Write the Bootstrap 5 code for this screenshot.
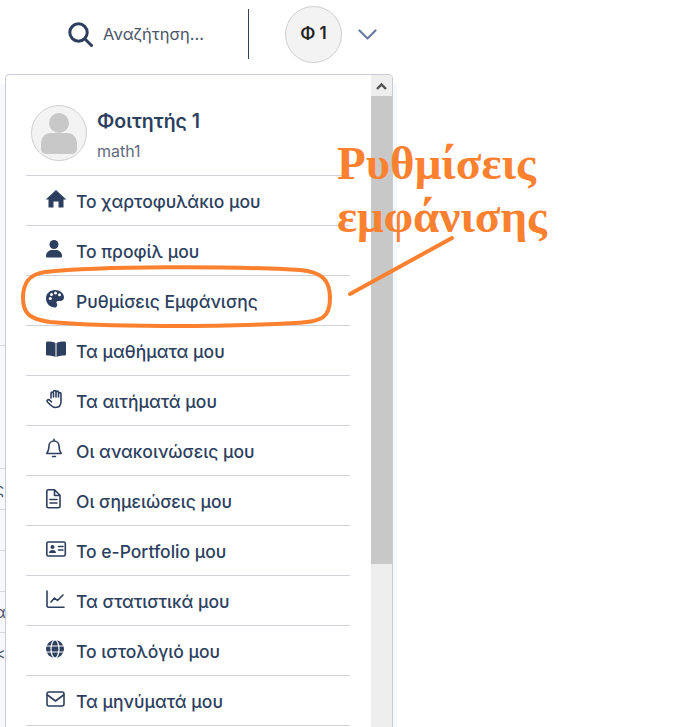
<!DOCTYPE html>
<html lang="el">
<head>
    <meta charset="UTF-8">
    <meta name="viewport" content="width=device-width, initial-scale=1.0">
    <title>Ρυθμίσεις εμφάνισης</title>
    <link href="https://cdn.jsdelivr.net/npm/bootstrap@5.3.2/dist/css/bootstrap.min.css" rel="stylesheet">
    <style>
        body {
            font-family: "Inter", "Noto Sans", sans-serif;
            color: #2d3f5e;
            height: 727px;
            overflow: hidden;
            position: relative;
            background: #fff;
        }
        .top-bar {
            height: 84px;
            padding: 6px 0 22px 68px;
        }
        .search-text {
            font-size: 16.5px;
            color: #4a5568;
            margin-left: 10px;
            width: 145px;
        }
        .top-sep {
            width: 1px;
            height: 50px;
            background: #33415c;
            margin-right: 36px;
        }
        .avatar-top {
            width: 57px;
            height: 57px;
            border: 1px solid #cfcfcf;
            background: #f3f3f3;
            color: #222;
            font-weight: 600;
            font-size: 17px;
        }
        .page-under {
            width: 397px;
            height: 643px;
            background: #f6f8fc;
        }
        .under-strip {
            width: 5px;
            padding-top: 261px;
        }
        .under-row {
            height: 41px;
            border-top: 1px solid #d5d8e0;
            font-size: 16px;
            line-height: 40px;
            color: #4a5568;
            white-space: nowrap;
            overflow: hidden;
        }
        .under-row.row-tall {
            height: 123px;
        }
        .under-row span {
            display: block;
            margin-left: -5px;
        }
        .user-menu.dropdown-menu {
            top: 74px;
            left: 5px;
            width: 388px;
            height: 680px;
            border: 1px solid #c9ccd6;
            border-radius: 4px 4px 0 0;
            overflow: hidden;
            color: #2d3f5e;
        }
        .menu-body {
            width: 365px;
            padding: 0 20px;
        }
        .menu-head {
            height: 101px;
            padding: 30px 0 0 5px;
            border-bottom: 1px solid #d0d3db;
        }
        .avatar-big {
            width: 56px;
            height: 56px;
            border: 1px solid #cfcfcf;
            background: #f3f3f3;
            margin-right: 10px;
        }
        .user-name {
            font-size: 19.5px;
            font-weight: 600;
            line-height: 22px;
            margin-bottom: 9px;
            margin-top: 5px;
        }
        .user-login {
            font-size: 16px;
            line-height: 20px;
            color: #5f6b7d;
        }
        .user-menu .dropdown-item {
            height: 50px;
            padding: 4px 0 0 20px;
            border-bottom: 1px solid #d0d3db;
            color: #2d3f5e;
            font-size: 17.5px;
            font-weight: 500;
        }
        .icon-box {
            width: 30px;
            height: 22px;
            flex: none;
            fill: #2d3f5e;
            margin-top: -8px;
        }
        .icon-line {
            fill: none;
            stroke: #2d3f5e;
            stroke-width: 1.6;
            stroke-linecap: round;
            stroke-linejoin: round;
        }
        .fake-scroll {
            width: 21px;
            background: #eeeeee;
            margin-left: 1px;
        }
        .scroll-btn {
            height: 21px;
        }
        .scroll-thumb {
            height: 468px;
            background: #c8c8c8;
        }
        .note-text {
            position: absolute;
            left: 337px;
            top: 137px;
            z-index: 1001;
            font-family: "Liberation Serif", serif;
            font-weight: 700;
            font-size: 47px;
            line-height: 53px;
            color: #fb8130;
        }
        .note-marks {
            position: absolute;
            left: 0;
            top: 0;
            z-index: 1001;
        }
    </style>
</head>
<body>

    <!-- Barra superior -->
    <header class="top-bar d-flex align-items-center">
        <svg width="25" height="25" viewBox="0 0 25 25" fill="none" stroke="#2d3f5e" stroke-width="3" stroke-linecap="round">
            <circle cx="10.5" cy="10.5" r="8.7"/>
            <path d="M17 17l6.5 6.5"/>
        </svg>
        <span class="search-text">Αναζήτηση...</span>
        <div class="top-sep"></div>
        <div class="avatar-top rounded-circle d-flex align-items-center justify-content-center">Φ 1</div>
        <svg class="ms-3" width="19" height="11" viewBox="0 0 19 11" fill="none" stroke="#6a7ba0" stroke-width="2.2" stroke-linecap="round" stroke-linejoin="round">
            <path d="M1.5 1.5l8 8 8-8"/>
        </svg>
    </header>

    <!-- Lo que queda debajo del menu -->
    <div class="page-under">
        <div class="under-strip">
            <div class="under-row row-tall"></div>
            <div class="under-row"><span>ς</span></div>
            <div class="under-row"></div>
            <div class="under-row"></div>
            <div class="under-row"><span>α</span></div>
            <div class="under-row"><span>&lt;</span></div>
        </div>
    </div>

    <!-- Menu de usuario -->
    <div class="user-menu dropdown-menu show p-0 d-flex">
        <div class="menu-body">
            <div class="menu-head d-flex">
                <div class="avatar-big rounded-circle d-flex align-items-center justify-content-center">
                    <svg width="38" height="42" viewBox="0 0 38 42" fill="#c8c8c8">
                        <circle cx="19" cy="11" r="10"/>
                        <path d="M1 32c0-7 4-11 10-11h16c6 0 10 4 10 11v4c0 4-2 6-6 6H7c-4 0-6-2-6-6z"/>
                    </svg>
                </div>
                <div>
                    <div class="user-name">Φοιτητής 1</div>
                    <div class="user-login">math1</div>
                </div>
            </div>

            <a class="dropdown-item d-flex align-items-center" href="#">
                <svg class="icon-box" viewBox="0 0 30 22"><path d="M10 2L20.300 11.500H17.500V19.500H12.500V13.500H7.500V19.500H2.500V11.500H-.3z"/></svg>
                Το χαρτοφυλάκιο μου
            </a>
            <a class="dropdown-item d-flex align-items-center" href="#">
                <svg class="icon-box" viewBox="0 0 30 22"><circle cx="8" cy="6.500" r="4.500"/><path d="M0 18c0-3.500 3-6 6-6h4c3 0 6 2.500 6 6 0 1-.5 1.500-1.500 1.500h-13C.5 19.500 0 19 0 18z"/></svg>
                Το προφίλ μου
            </a>
            <a class="dropdown-item d-flex align-items-center" href="#">
                <svg class="icon-box" viewBox="0 0 30 22"><path d="M9 2c5 0 9 3.300 9 7.500 0 2.500-2 3.500-4 3.500h-2c-1.500 0-2 1.500-1.200 2.500 1 1.300.2 4-1.800 4-5 0-9-4-9-9s4-8.500 9-8.500z"/><g fill="#fff"><circle cx="4.300" cy="10.500" r="1.500"/><circle cx="5.500" cy="6.500" r="1.500"/><circle cx="9.500" cy="5" r="1.500"/><circle cx="13.500" cy="6.800" r="1.500"/></g></svg>
                Ρυθμίσεις Εμφάνισης
            </a>
            <a class="dropdown-item d-flex align-items-center" href="#">
                <svg class="icon-box" viewBox="0 0 30 22"><path d="M0 5c0-1 .7-1.500 1.500-1.500 3 0 6 .3 8 1.500v14c-2-1-5-1.500-8-1.500-.8 0-1.500-.5-1.500-1.500zM20 5c0-1-.7-1.500-1.500-1.500-3 0-6 .3-8 1.500v14c2-1 5-1.500 8-1.500.8 0 1.500-.5 1.500-1.500z"/></svg>
                Τα μαθήματα μου
            </a>
            <a class="dropdown-item d-flex align-items-center" href="#">
                <svg class="icon-box" viewBox="0 0 30 22"><path class="icon-line" d="M5 10V5.500c0-1.800 2.500-1.800 2.500 0V9m0-5c0-2 2.500-2 2.500 0v5m0-4.500c0-1.800 2.500-1.800 2.500 0V9m0-3c0-1.800 2.500-1.800 2.500 0v7.500c0 4-2.500 6-5.500 6-2.500 0-3.500-1-5-2.500l-3-3c-1.300-1.300.5-3 2-2l2 1.800"/></svg>
                Τα αιτήματά μου
            </a>
            <a class="dropdown-item d-flex align-items-center" href="#">
                <svg class="icon-box" viewBox="0 0 30 22"><path class="icon-line" d="M8 3c-3 0-5 2.200-5 5 0 4-1 5.500-2.200 7.500h14.400C14 13.500 13 12 13 8c0-2.800-2-5-5-5zM8 1.300V3M6.500 18.500h3"/></svg>
                Οι ανακοινώσεις μου
            </a>
            <a class="dropdown-item d-flex align-items-center" href="#">
                <svg class="icon-box" viewBox="0 0 30 22"><path class="icon-line" d="M2.500 1.800h6l5.500 5.500V18c0 1-.7 1.700-1.700 1.700H2.500c-1 0-1.700-.7-1.700-1.700V3.500c0-1 .7-1.700 1.700-1.700zM8.500 2v5.500H14M4 11.500h7M4 15h7"/></svg>
                Οι σημειώσεις μου
            </a>
            <a class="dropdown-item d-flex align-items-center" href="#">
                <svg class="icon-box" viewBox="0 0 30 22"><rect class="icon-line" x=".8" y="4" width="18.500" height="14" rx="1.500"/><circle cx="6.500" cy="9" r="2"/><path d="M3 15c0-2 1.500-3 3.500-3s3.500 1 3.500 3z"/><path class="icon-line" d="M12.500 8.500H17M12.500 12H17"/></svg>
                Το e-Portfolio μου
            </a>
            <a class="dropdown-item d-flex align-items-center" href="#">
                <svg class="icon-box" viewBox="0 0 30 22"><path class="icon-line" d="M1 3v14.500c0 1 .6 1.700 1.700 1.700H18"/><path class="icon-line" d="M5 14l3.500-4 3 2.500L17 7"/></svg>
                Τα στατιστικά μου
            </a>
            <a class="dropdown-item d-flex align-items-center" href="#">
                <svg class="icon-box" viewBox="0 0 30 22"><circle cx="9" cy="11" r="9"/><g fill="none" stroke="#fff" stroke-width="1.200"><ellipse cx="9" cy="11" rx="4" ry="9"/><path d="M0 8h18M0 14h18"/></g></svg>
                Το ιστολόγιό μου
            </a>
            <a class="dropdown-item d-flex align-items-center" href="#">
                <svg class="icon-box" viewBox="0 0 30 22"><rect class="icon-line" x="1" y="4" width="17" height="14" rx="2"/><path class="icon-line" d="M1.500 7l8 6 8-6"/></svg>
                Τα μηνύματά μου
            </a>
        </div>
        <div class="fake-scroll">
            <div class="scroll-btn d-flex align-items-center justify-content-center">
                <svg width="11" height="8" viewBox="0 0 11 8" fill="none" stroke="#505050" stroke-width="2.400"><path d="M1 7l4.500-4.500L10 7"/></svg>
            </div>
            <div class="scroll-thumb"></div>
        </div>
    </div>

    <!-- Anotacion naranja sobre la captura -->
    <svg class="note-marks" width="673" height="727" fill="none" stroke="#fb8130" stroke-linecap="round">
        <path stroke-width="4" d="M45 272C100 266 230 266 300 270C322 272 330 280 330 298C330 316 324 322 295 323C220 327 100 327 50 322C30 319 23 314 23 298C23 282 30 274 45 272Z"/>
        <path stroke-width="4" d="M350 294L452 238"/>
    </svg>
    <div class="note-text">Ρυθμίσεις<br>εμφάνισης</div>

    <script src="https://cdn.jsdelivr.net/npm/bootstrap@5.3.2/dist/js/bootstrap.bundle.min.js"></script>
</body>
</html>
